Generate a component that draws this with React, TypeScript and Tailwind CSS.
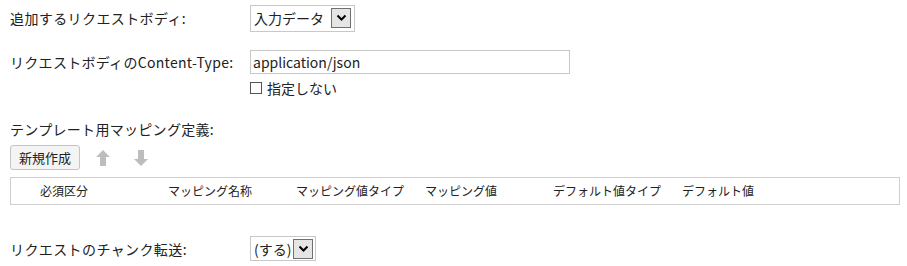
const font = { fontFamily: "'Noto Sans CJK JP', 'Noto Sans', sans-serif" };

const Chevron = () => (
  <span className="flex h-[20px] w-[20px] items-center justify-center border border-[#707070] bg-[#e5e5e5]">
    <svg width="11" height="8" viewBox="0 0 11 8">
      <path d="M1.5 1.5 L5.5 5.5 L9.5 1.5" fill="none" stroke="#000" strokeWidth="2" />
    </svg>
  </span>
);

const Arrow = ({ up }: { up?: boolean }) => (
  <svg width="14" height="16" viewBox="0 0 14 16" style={{ transform: up ? undefined : "rotate(180deg)" }}>
    <path d="M7 0 L14 7 L10 7 L10 16 L4 16 L4 7 L0 7 Z" fill="#bdbdbd" />
  </svg>
);

const columns = ["必須区分", "マッピング名称", "マッピング値タイプ", "マッピング値", "デフォルト値タイプ", "デフォルト値"];

export default function App() {
  return (
    <div className="h-[266px] w-[907px] bg-white text-[13px] leading-none text-[#222]" style={font}>
      <div className="flex h-[36px] items-center">
        <div className="w-[250px] pl-[10px] text-[14px] tracking-[0.4px]">追加するリクエストボディ:</div>
        <div className="flex h-[27px] w-[105px] items-center justify-between border border-[#c8c8c8] pl-[3px] pr-[3px] text-[14px]">
          <span>入力データ</span>
          <Chevron />
        </div>
      </div>

      <div className="mt-[14px] flex">
        <div className="w-[250px] pl-[10px] pt-[5px] text-[14px] tracking-[0.3px]">リクエストボディのContent-Type:</div>
        <div className="flex flex-col">
          <div className="flex h-[24px] w-[320px] items-center border border-[#c8c8c8] px-[2px] text-[14px]">application/json</div>
          <label className="mt-[7px] flex items-center gap-[5px] text-[14px]">
            <span className="h-[12px] w-[12px] border border-[#555]" />
            <span>指定しない</span>
          </label>
        </div>
      </div>

      <div className="mt-[27px] pl-[10px] text-[14px] tracking-[0.3px]">テンプレート用マッピング定義:</div>
      <div className="mt-[9px] flex items-center pl-[10px]">
        <button className="flex h-[25px] w-[70px] items-center justify-center rounded-[3px] border border-[#c4c4c4] bg-[#f4f4f4] text-[13px]">新規作成</button>
        <span className="ml-[16px] flex"><Arrow up /></span>
        <span className="ml-[24px] flex"><Arrow /></span>
      </div>
      <div className="ml-[10px] mt-[7px] grid h-[28px] w-[890px] grid-cols-[128px_128px_129px_128px_129px_128px] items-center border border-[#cfcfcf] pl-[29px] text-[12px]">
        {columns.map((c) => (
          <span key={c}>{c}</span>
        ))}
      </div>

      <div className="mt-[31px] flex items-center">
        <div className="w-[250px] pl-[10px] text-[14px] tracking-[0.4px]">リクエストのチャンク転送:</div>
        <div className="flex h-[25px] w-[66px] items-center justify-between border border-[#c8c8c8] pl-[3px] pr-[2px] text-[14px]">
          <span>(する)</span>
          <Chevron />
        </div>
      </div>
    </div>
  );
}
